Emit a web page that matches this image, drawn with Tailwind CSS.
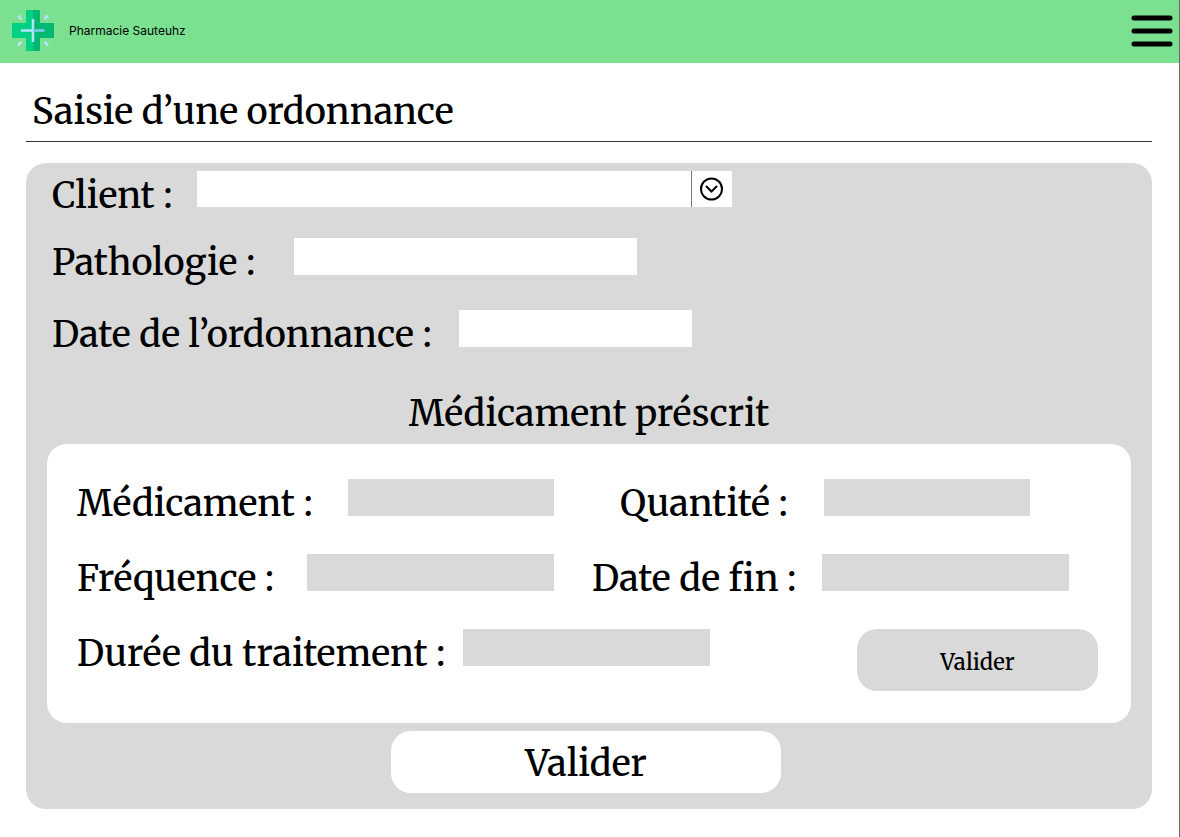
<!DOCTYPE html>
<html lang="fr">
<head>
<meta charset="utf-8">
<meta name="viewport" content="width=device-width, initial-scale=1">
<title>Pharmacie Sauteuhz</title>
<script src="https://cdn.jsdelivr.net/npm/@tailwindcss/browser@4"></script>
</head>
<body class="flex min-h-screen flex-col border-r border-[#6b6b6b] bg-white font-[Merriweather,'Liberation_Serif',serif] text-[36px] leading-[50px] font-medium text-black">
  <header class="flex h-[63px] items-center justify-between bg-[#7be191] pr-1.5 pl-3">
    <a href="#" class="flex items-center gap-[15px] pb-0.5 font-[Inter,sans-serif] text-[12px] leading-5 font-normal">
      <svg class="size-[42px]" viewBox="0 0 42 42" aria-hidden="true">
        <path d="M14 0h14v13h14v15H28v13H14V28H0V13h14z" fill="#00d083"/>
        <path d="M21 0h7v13h14v15H28v13h-7z" fill="#00b871"/>
        <path d="M21 9v23M9 20.500h12" stroke="#b5e4fa" stroke-width="2.500" fill="none"/>
        <path d="M21 20.500h11.500" stroke="#82cbee" stroke-width="2.500"/>
        <path d="M7 6.500l1.500 1.800M35 6.500l-1.500 1.800M7 34.500l1.500-1.800M35 34.500l-1.500-1.800" stroke="#b5e4fa" stroke-width="2.800" stroke-linecap="round"/>
      </svg>
      Pharmacie Sauteuhz
    </a>
    <button type="button" aria-label="Menu" class="pb-0.5">
      <svg class="h-8 w-[42px]" viewBox="0 0 42 32" fill="none" stroke="#000" stroke-width="5" stroke-linecap="round" aria-hidden="true"><path d="M3 3h36M3 16h36M3 29h36"/></svg>
    </button>
  </header>

  <main class="pt-6 pr-[27px] pb-7 pl-[26px]">
    <h1 class="border-b border-[#333] pb-1 pl-1.5">Saisie d’une ordonnance</h1>

    <form class="mt-[21px] rounded-[20px] bg-[#d9d9d9] px-[21px] pt-2 pb-4">
      <div class="flex items-start whitespace-nowrap pl-[5px]">
        <label for="client" class="w-[145px]">Client :</label>
        <div class="relative h-9 w-[535px]">
          <select id="client" class="block size-full appearance-none bg-white px-2 text-xl"><option></option></select>
          <div class="pointer-events-none absolute inset-y-0 right-0 flex w-[41px] items-center justify-center border-l border-[#777]">
            <svg class="size-6" viewBox="0 0 24 24" fill="none" stroke="#000" stroke-width="2" aria-hidden="true"><circle cx="11.500" cy="12" r="10.500"/><path d="M6 9l5.500 5.500L17 9"/></svg>
          </div>
        </div>
      </div>
      <div class="mt-[17px] flex items-start whitespace-nowrap pl-[5px]">
        <label for="pathologie" class="w-[242px]">Pathologie :</label>
        <input id="pathologie" type="text" class="h-[37px] w-[343px] bg-white px-2 text-xl">
      </div>
      <div class="mt-[22px] flex items-start whitespace-nowrap pl-[5px]">
        <label for="date" class="w-[407px]">Date de l’ordonnance :</label>
        <input id="date" type="text" class="h-[37px] w-[233px] bg-white px-2 text-xl">
      </div>

      <h2 class="mt-[29px] text-center">Médicament préscrit</h2>

      <section class="mt-[5px] flex flex-col gap-[25px] rounded-[20px] bg-white pt-[35px] pr-[33px] pb-8 pl-[30px] whitespace-nowrap">
        <div class="flex items-start">
          <label for="medicament" class="w-[271px]">Médicament :</label>
          <input id="medicament" type="text" class="h-[37px] w-[206px] bg-[#d9d9d9] px-2 text-xl">
          <label for="quantite" class="ml-[66px] w-[204px]">Quantité :</label>
          <input id="quantite" type="text" class="h-[37px] w-[206px] bg-[#d9d9d9] px-2 text-xl">
        </div>
        <div class="flex items-start">
          <label for="frequence" class="w-[230px]">Fréquence :</label>
          <input id="frequence" type="text" class="h-[37px] w-[247px] bg-[#d9d9d9] px-2 text-xl">
          <label for="fin" class="ml-[38px] w-[230px]">Date de fin :</label>
          <input id="fin" type="text" class="h-[37px] w-[247px] bg-[#d9d9d9] px-2 text-xl">
        </div>
        <div class="flex items-start">
          <label for="duree" class="w-[386px]">Durée du traitement :</label>
          <input id="duree" type="text" class="h-[37px] w-[247px] bg-[#d9d9d9] px-2 text-xl">
          <button type="button" class="ml-auto h-[62px] w-[241px] rounded-[20px] bg-[#d9d9d9] pt-1 text-[22px] leading-8">Valider</button>
        </div>
      </section>

      <div class="mt-2 flex justify-center pr-1.5">
        <button type="submit" class="h-[62px] w-[390px] rounded-[20px] bg-white pt-1">Valider</button>
      </div>
    </form>
  </main>
</body>
</html>
